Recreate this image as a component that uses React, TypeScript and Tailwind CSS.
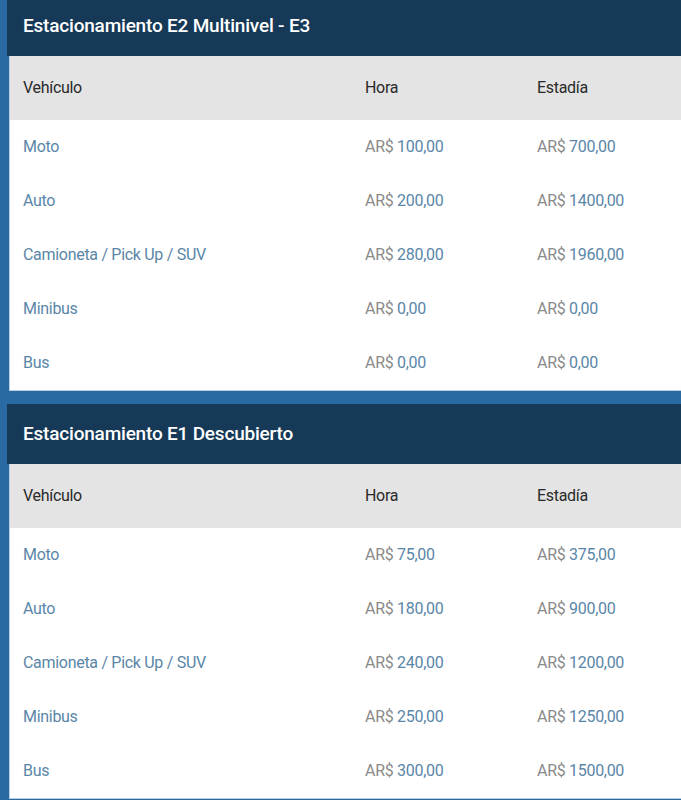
const TABLES = [
  {
    title: 'Estacionamiento E2 Multinivel - E3',
    rows: [
      ['Moto', '100,00', '700,00'],
      ['Auto', '200,00', '1400,00'],
      ['Camioneta / Pick Up / SUV', '280,00', '1960,00'],
      ['Minibus', '0,00', '0,00'],
      ['Bus', '0,00', '0,00'],
    ],
  },
  {
    title: 'Estacionamiento E1 Descubierto',
    rows: [
      ['Moto', '75,00', '375,00'],
      ['Auto', '180,00', '900,00'],
      ['Camioneta / Pick Up / SUV', '240,00', '1200,00'],
      ['Minibus', '250,00', '1250,00'],
      ['Bus', '300,00', '1500,00'],
    ],
  },
];

function Price({ value }: { value: string }) {
  return (
    <span>
      <span className="text-[#8a8a8a]">AR$ </span>
      <span className="text-[#5a86a8]">{value}</span>
    </span>
  );
}

function RateTable({ title, rows }: { title: string; rows: string[][] }) {
  return (
    <section className="pl-[7px]">
      <div className="h-[60px] bg-[#153956] flex items-center pl-4 text-[19px] font-medium tracking-[-0.2px] text-white">
        {title}
      </div>
      <div className="ml-[2px] border-l border-b border-[#b9cde0] bg-white">
        <div className="grid grid-cols-[342px_172px_1fr] h-[64px] items-center bg-[#e4e4e4] pl-[13px] text-[16px] text-[#2a2a2a]">
          <span>Vehículo</span>
          <span>Hora</span>
          <span>Estadía</span>
        </div>
        {rows.map(([name, hour, day]) => (
          <div key={name} className="grid grid-cols-[342px_172px_1fr] h-[54px] items-center pl-[13px] text-[16px]">
            <span className="text-[#5a86a8]">{name}</span>
            <Price value={hour} />
            <Price value={day} />
          </div>
        ))}
      </div>
    </section>
  );
}

export default function App() {
  return (
    <div className="min-h-[800px] bg-[#2a6aa3] overflow-hidden font-['Roboto',sans-serif] tracking-[-0.3px]">
      <div className="-mt-[4px] flex flex-col gap-[13px]">
        {TABLES.map((t) => (
          <RateTable key={t.title} title={t.title} rows={t.rows} />
        ))}
      </div>
    </div>
  );
}
